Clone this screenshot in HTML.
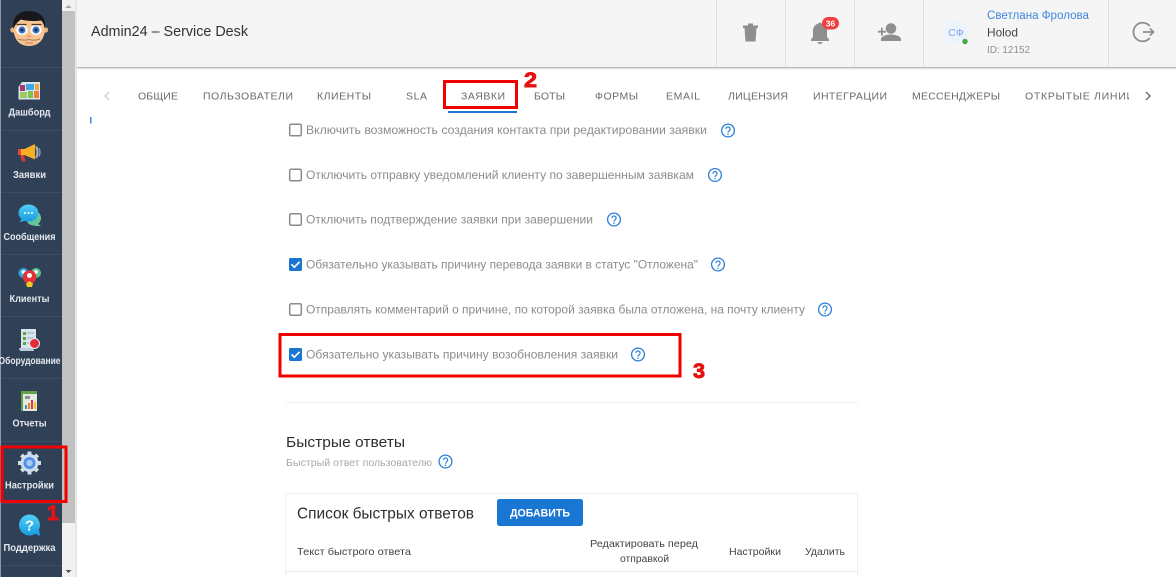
<!DOCTYPE html>
<html lang="ru"><head><meta charset="utf-8"><title>Admin24</title>
<style>
html,body{margin:0;padding:0;background:#fff;overflow:hidden}
svg{display:block;position:absolute;left:0;top:0}
text{font-family:"Liberation Sans",sans-serif}
.side{font-size:10px;font-weight:bold;fill:#e4e8ec;text-anchor:middle}
.tab{font-size:10.5px;fill:#6a6a6a}
.opt{font-size:12px;fill:#8c8c8c}
.th{font-size:10.5px;fill:#444}
.num{font-size:21px;font-weight:bold;fill:#e81010;stroke:#e81010;stroke-width:.9px}
</style></head><body>
<svg width="1176" height="577" viewBox="0 0 1176 577" xmlns="http://www.w3.org/2000/svg">
<defs>
<g id="help"><circle r="6.4" fill="none" stroke="#2a7fd6" stroke-width="1.3"/><path d="M-2.100-1.400a2.100 2.100 0 1 1 3.300 1.700c-.8.600-1.200.9-1.200 1.800" fill="none" stroke="#2a7fd6" stroke-width="1.200"/><circle cx="0" cy="3.700" r=".75" fill="#2a7fd6"/></g>
<g id="cb"><rect x="-5.800" y="-5.800" width="11.600" height="11.600" rx="1.400" fill="#fff" stroke="#8a8a8a" stroke-width="1.500"/></g>
<g id="cbc"><rect x="-6.500" y="-6.500" width="13" height="13" rx="1.500" fill="#1976d2"/><path d="M-4-.2l2.800 2.900 5.300-5.400" fill="none" stroke="#fff" stroke-width="1.700"/></g>
<linearGradient id="bub" x1="0" y1="0" x2="0" y2="1"><stop offset="0" stop-color="#4fd0f5"/><stop offset="1" stop-color="#1a9be0"/></linearGradient>
<clipPath id="tc"><rect x="1000" y="85" width="129" height="20"/></clipPath>
</defs>

<!-- sidebar -->
<rect width="62" height="577" fill="#2f4057"/>
<rect width="1" height="577" fill="#8d97a3"/>
<path d="M1 67.500H62M1 130.500H62M1 192.500H62M1 254.500H62M1 316.500H62M1 378.500H62M1 441.500H62M1 503.500H62M1 565.500H62" stroke="#3d4e64"/>
<!-- scrollbar -->
<rect x="62" width="13" height="577" fill="#f1f1f1"/>
<rect x="62" y="11" width="13" height="512" fill="#c1c1c1"/>
<path d="M65.500 8l3-3 3 3z" fill="#a3a3a3"/>
<path d="M65.500 570l3 3 3-3z" fill="#505050"/>
<rect x="75" width="2" height="577" fill="#e6e6e6"/>

<!-- avatar -->
<g>
<circle cx="12.800" cy="30" r="2.600" fill="#e9b483"/><circle cx="45.600" cy="30" r="2.600" fill="#e9b483"/>
<path d="M13.500 28c0-9 6-14 15.500-14s16 5 16 14c0 11-6 18-16 18s-15.500-7-15.500-18z" fill="#f6c593"/>
<path d="M13.500 29c-2-11 5-18 15-18 10 0 18 5 16.500 18-1-4-2-7-4-8.500-6 1-15 .5-20-1-3 2-6 5-7.500 9.500z" fill="#18181c"/>
<ellipse cx="22" cy="30" rx="5.600" ry="5" fill="#fff"/><ellipse cx="36" cy="30" rx="5.600" ry="5" fill="#fff"/>
<circle cx="22" cy="30" r="3.600" fill="#3f78c9"/><circle cx="36" cy="30" r="3.600" fill="#3f78c9"/>
<circle cx="22" cy="30" r="1.500" fill="#12264a"/><circle cx="36" cy="30" r="1.500" fill="#12264a"/>
<path d="M16.500 24.500h10M31.500 24.500h10" stroke="#4a3a2c" stroke-width="1.300"/>
<path d="M27.500 35h3.200l1 2.200h-5.200z" fill="#ee9d80"/>
<path d="M18 39c4 1.500 7 1.500 11 .5 4 1 7 1 11-.5" fill="none" stroke="#a87a55"/>
<path d="M25 43h8" stroke="#dd8f72" stroke-width="1.500"/>
</g>

<!-- dashboard -->
<path d="M18.500 87l3.500-5h18v17.500H18.500z" fill="#d8e3ec"/>
<rect x="20" y="85" width="5" height="6" fill="#a33a6c"/><rect x="26" y="84" width="8" height="6" fill="#3ea6e8"/><rect x="35" y="84" width="4" height="6" fill="#f0a43a"/>
<rect x="20" y="92" width="7" height="6" fill="#9ccc5a"/><rect x="28" y="91" width="5" height="7" fill="#7ec24c"/><rect x="34" y="91" width="5" height="7" fill="#ee7d3a"/>
<text class="side" x="29.500" y="115.500" textLength="42" lengthAdjust="spacingAndGlyphs">Дашборд</text>

<!-- megaphone -->
<path d="M18.500 149h6l10.500-5v15.500l-10.500-4.500h-6z" fill="#f9b020"/>
<path d="M20 155h4l1.500 6.500h-3.500z" fill="#d83a3a"/><rect x="18" y="149" width="3" height="6" fill="#e04a3a"/>
<path d="M36 146.500c2 3.500 2 8 0 11.500" fill="none" stroke="#a9b3bd" stroke-width="2"/><path d="M39 148c1.200 2.500 1.200 6 0 8.500" fill="none" stroke="#8c98a5" stroke-width="1.300"/>
<text class="side" x="29.500" y="178" textLength="33" lengthAdjust="spacingAndGlyphs">Заявки</text>

<!-- messages -->
<circle cx="33.500" cy="218" r="7.500" fill="#63c79a"/><path d="M37 223l4 3-7 0z" fill="#63c79a"/>
<ellipse cx="28.500" cy="213" rx="10" ry="8.500" fill="url(#bub)"/><path d="M22 218l-2.500 4.500 7-2.500z" fill="#2aa9e6"/>
<circle cx="25" cy="213" r="1" fill="#fff"/><circle cx="28.500" cy="213" r="1" fill="#fff"/><circle cx="32" cy="213" r="1" fill="#fff"/>
<text class="side" x="29.500" y="240" textLength="52" lengthAdjust="spacingAndGlyphs">Сообщения</text>

<!-- clients -->
<circle cx="23.500" cy="273" r="5" fill="#2fa8e0"/><circle cx="36" cy="273" r="5" fill="#62c08c"/>
<circle cx="23.500" cy="272" r="2" fill="#e8f5fb"/><circle cx="36" cy="272" r="2" fill="#e8f5fb"/>
<circle cx="29.500" cy="277" r="6.800" fill="#e2323a"/><circle cx="29.500" cy="275.500" r="2.500" fill="#fff"/>
<path d="M26 283.500l3.500-2.500 3.500 2.500-1 3.500h-5z" fill="#f4c823"/>
<text class="side" x="29.500" y="302" textLength="40" lengthAdjust="spacingAndGlyphs">Клиенты</text>

<!-- equipment -->
<rect x="21" y="329" width="15" height="19" fill="#d9e3ee"/>
<path d="M23 332h3v3h-3zM23 337h3v3h-3zM23 342h3v3h-3z" fill="#5aa63c"/>
<path d="M27 333h7M27 338h7M27 343h5" stroke="#9aa8b8"/>
<path d="M19 348h14l1 3H20z" fill="#bcc9d8"/>
<circle cx="34.500" cy="343.500" r="5" fill="#e62c3a" stroke="#e8eef4"/>
<text class="side" x="29.500" y="364" textLength="62" lengthAdjust="spacingAndGlyphs">Оборудование</text>

<!-- reports -->
<rect x="21" y="391" width="16" height="20" fill="#e6e9e2"/><path d="M21 391h16v3H21z" fill="#5fa24a"/><rect x="21" y="391" width="2" height="20" fill="#5fa24a"/>
<rect x="25" y="396" width="5" height="3" fill="#8a8f94"/>
<rect x="25" y="405" width="2" height="4" fill="#3e8fd8"/><rect x="28" y="403" width="2" height="6" fill="#e8842a"/><rect x="31" y="400" width="2" height="9" fill="#d83a3a"/><rect x="34" y="402" width="2" height="7" fill="#f0c02a"/>
<text class="side" x="29.500" y="426.500" textLength="34" lengthAdjust="spacingAndGlyphs">Отчеты</text>

<!-- gear -->
<g transform="translate(29.500 463)">
<circle r="9" fill="#cfdcec"/>
<path d="M0-11.500V-8M0 8V11.500M-11.500 0H-8M8 0H11.500M-8.100-8.100L-5.700-5.700M5.700 5.700L8.100 8.100M-8.100 8.100L-5.700 5.700M5.700-5.700L8.100-8.100" stroke="#cfdcec" stroke-width="4"/>
<circle r="6" fill="#4f8fe6"/><circle r="3.200" fill="#a9c8ef"/>
</g>
<text class="side" x="29.500" y="488.500" textLength="49" lengthAdjust="spacingAndGlyphs">Настройки</text>

<!-- support -->
<circle cx="29.500" cy="525" r="10.500" fill="url(#bub)"/><path d="M34 533l6 3-1-7z" fill="#1f9fe2"/>
<text x="29.500" y="530.500" text-anchor="middle" font-size="15" font-weight="bold" fill="#fff">?</text>
<text class="side" x="29.500" y="551" textLength="52" lengthAdjust="spacingAndGlyphs">Поддержка</text>

<!-- header -->
<rect x="77" width="1099" height="67" fill="#f5f5f5"/>
<rect x="77" y="67" width="1099" height="1" fill="#b4b4b4"/>
<rect x="77" y="68" width="1099" height="1.500" fill="#e8e8e8"/>
<path d="M716.500 0V67M785.500 0V67M854.500 0V67M923.500 0V67M1108.500 0V67" stroke="#e0e0e0"/>
<text x="91" y="36" font-size="14.500" fill="#333" textLength="157" lengthAdjust="spacingAndGlyphs">Admin24 – Service Desk</text>

<!-- trash -->
<path d="M743 25.500h15v2.500h-15zM748 23.500h5v2h-5zM744.500 28h12l-1 13.500h-10z" fill="#8f8f8f"/>
<!-- bell -->
<path d="M811 39.500l2-2.500v-6.500c0-3.600 2.300-6 5-6.800.8-1.400 3-1.400 3.800 0 3 .8 5.200 3.200 5.200 6.800V37l2 2.500V41H811z" fill="#8f8f8f"/>
<path d="M817.500 42h5a2.500 2 0 0 1-5 0z" fill="#8f8f8f"/>
<rect x="822" y="17" width="17" height="12.500" rx="6.200" fill="#f03f3f"/>
<text x="830.500" y="26.500" font-size="8.500" font-weight="bold" fill="#fff" text-anchor="middle">36</text>
<!-- add person -->
<circle cx="891" cy="28.500" r="5.300" fill="#8f8f8f"/>
<path d="M878 30.800h3v-3h1.800v3h3v1.800h-3v3H881v-3h-3z" fill="#8f8f8f"/>
<path d="M881 41v-1.800c0-3.200 6.500-4.700 10-4.700s10 1.500 10 4.700V41z" fill="#8f8f8f"/>
<!-- user -->
<circle cx="956" cy="32" r="12" fill="#edf3fc"/>
<text x="956" y="36" font-size="10.500" fill="#7ea6e8" text-anchor="middle">СФ</text>
<circle cx="965" cy="41.500" r="2.700" fill="#43a63f"/>
<text x="987" y="19" font-size="11.500" fill="#3f87dd" textLength="102" lengthAdjust="spacingAndGlyphs">Светлана Фролова</text>
<text x="987" y="36.500" font-size="12" fill="#444" textLength="31" lengthAdjust="spacingAndGlyphs">Holod</text>
<text x="987" y="53" font-size="10" fill="#8f8f8f" textLength="43" lengthAdjust="spacingAndGlyphs">ID: 12152</text>
<!-- logout -->
<path d="M1149.800 26a9.300 9.300 0 1 0 0 12" fill="none" stroke="#8f8f8f" stroke-width="1.800"/>
<path d="M1143 32h10.500M1150 28.500l3.500 3.500-3.500 3.500" fill="none" stroke="#8f8f8f" stroke-width="1.800"/>

<!-- tabs -->
<path d="M109 92l-4 4 4 4" fill="none" stroke="#c4c4c4" stroke-width="1.200"/>
<text class="tab" x="138" y="99.500" textLength="40">ОБЩИЕ</text>
<text class="tab" x="203" y="99.500" textLength="90">ПОЛЬЗОВАТЕЛИ</text>
<text class="tab" x="317" y="99.500" textLength="54">КЛИЕНТЫ</text>
<text class="tab" x="406" y="99.500" textLength="21">SLA</text>
<text class="tab" x="461" y="99.500" textLength="44">ЗАЯВКИ</text>
<text class="tab" x="534" y="99.500" textLength="31">БОТЫ</text>
<text class="tab" x="595" y="99.500" textLength="43">ФОРМЫ</text>
<text class="tab" x="666" y="99.500" textLength="34">EMAIL</text>
<text class="tab" x="728" y="99.500" textLength="60">ЛИЦЕНЗИЯ</text>
<text class="tab" x="813" y="99.500" textLength="74">ИНТЕГРАЦИИ</text>
<text class="tab" x="912" y="99.500" textLength="88">МЕССЕНДЖЕРЫ</text>
<g clip-path="url(#tc)"><text class="tab" x="1025" y="99.500" textLength="109">ОТКРЫТЫЕ ЛИНИИ</text></g>
<path d="M1146 92l4 4-4 4" fill="none" stroke="#666" stroke-width="1.300"/>
<rect x="448" y="111" width="69" height="2" fill="#1976d2"/>
<rect x="90" y="117" width="1.500" height="6.500" fill="#3f87dd"/>

<!-- options -->
<use href="#cb" x="295.500" y="130"/><text class="opt" x="306" y="134" textLength="401" lengthAdjust="spacingAndGlyphs">Включить возможность создания контакта при редактировании заявки</text><use href="#help" x="728" y="130.500"/>
<use href="#cb" x="295.500" y="175"/><text class="opt" x="306" y="179" textLength="388" lengthAdjust="spacingAndGlyphs">Отключить отправку уведомлений клиенту по завершенным заявкам</text><use href="#help" x="715" y="175"/>
<use href="#cb" x="295.500" y="219.500"/><text class="opt" x="306" y="223.500" textLength="287" lengthAdjust="spacingAndGlyphs">Отключить подтверждение заявки при завершении</text><use href="#help" x="614" y="219.500"/>
<use href="#cbc" x="295.500" y="264.500"/><text class="opt" x="306" y="268.500" textLength="392" lengthAdjust="spacingAndGlyphs">Обязательно указывать причину перевода заявки в статус "Отложена"</text><use href="#help" x="718" y="264.500"/>
<use href="#cb" x="295.500" y="309.500"/><text class="opt" x="306" y="313.500" textLength="499" lengthAdjust="spacingAndGlyphs">Отправлять комментарий о причине, по которой заявка была отложена, на почту клиенту</text><use href="#help" x="825" y="309.500"/>
<use href="#cbc" x="295.500" y="354.500"/><text class="opt" x="306" y="358.500" textLength="312" lengthAdjust="spacingAndGlyphs">Обязательно указывать причину возобновления заявки</text><use href="#help" x="638" y="354.500"/>

<rect x="286" y="402" width="572" height="1" fill="#eeeeee"/>

<!-- quick answers -->
<text x="286" y="447" font-size="15" fill="#2e2e2e" textLength="119" lengthAdjust="spacingAndGlyphs">Быстрые ответы</text>
<text x="286" y="466" font-size="10.500" fill="#a8a8a8" textLength="146" lengthAdjust="spacingAndGlyphs">Быстрый ответ пользователю</text>
<use href="#help" x="445.500" y="461.500"/>

<rect x="285.500" y="493.500" width="572" height="90" rx="3" fill="#fff" stroke="#f0f0f0"/>
<text x="297" y="518.500" font-size="15.500" fill="#2e2e2e" textLength="177" lengthAdjust="spacingAndGlyphs">Список быстрых ответов</text>
<rect x="497" y="499" width="86" height="27" rx="2.500" fill="#1976d2"/>
<text x="510" y="516.500" font-size="11" font-weight="bold" fill="#fff" textLength="60" lengthAdjust="spacingAndGlyphs">ДОБАВИТЬ</text>
<text class="th" x="297" y="555" textLength="114" lengthAdjust="spacingAndGlyphs">Текст быстрого ответа</text>
<text class="th" x="590" y="547" textLength="108" lengthAdjust="spacingAndGlyphs">Редактировать перед</text>
<text class="th" x="620" y="562" textLength="49" lengthAdjust="spacingAndGlyphs">отправкой</text>
<text class="th" x="729" y="555" textLength="52" lengthAdjust="spacingAndGlyphs">Настройки</text>
<text class="th" x="805" y="555" textLength="40" lengthAdjust="spacingAndGlyphs">Удалить</text>
<rect x="285" y="571" width="573" height="1" fill="#e8e8e8"/>

<!-- annotations -->
<rect x="2" y="447" width="64" height="54.500" fill="none" stroke="#f00000" stroke-width="3"/>
<rect x="444.500" y="81.500" width="72" height="26" fill="none" stroke="#f00000" stroke-width="3"/>
<rect x="280" y="334.500" width="400" height="41.500" fill="none" stroke="#f00000" stroke-width="3"/>
<text class="num" x="47" y="520">1</text>
<text class="num" x="524" y="87" textLength="13" lengthAdjust="spacingAndGlyphs">2</text>
<text class="num" x="693" y="378" textLength="12" lengthAdjust="spacingAndGlyphs">3</text>
</svg>
</body></html>
